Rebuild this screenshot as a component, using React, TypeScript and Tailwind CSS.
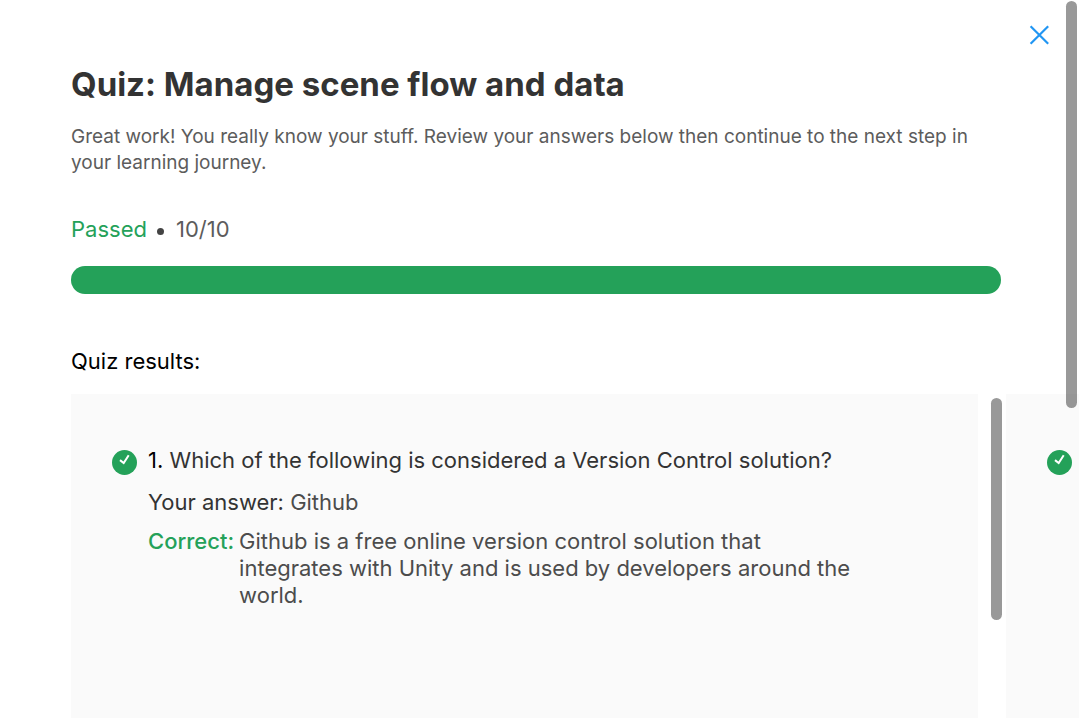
function CheckBadge() {
  return (
    <svg className="size-[25px] shrink-0" viewBox="0 0 25 25" fill="none" aria-hidden="true">
      <circle cx="12.5" cy="12.5" r="12.5" fill="#24A159" />
      <path d="M8 10.1 L11.7 13.1 L16.7 5.3" stroke="#fff" strokeWidth="2" />
    </svg>
  );
}

function ResultCard({ children }: { children?: React.ReactNode }) {
  return (
    <li className="flex w-full shrink-0">
      <article className="flex min-w-0 grow items-start gap-[11px] bg-[#fafafa] pt-14 pr-[120px] pl-[41px]">
        {children}
      </article>
      <div className="w-7 shrink-0 pt-1 pl-[13px]">
        <div className="h-[222px] w-[11px] rounded-full bg-[#999]" />
      </div>
    </li>
  );
}

export default function App() {
  return (
    <main
      className="relative flex h-screen flex-col overflow-hidden bg-white pt-5 pl-[71px] font-['Inter',sans-serif] text-[#333]"
      role="dialog"
      aria-labelledby="quiz-title"
    >
      <div className="flex shrink-0 justify-end pr-[25px]">
        <button type="button" aria-label="Close" className="flex size-[30px] items-center justify-center">
          <svg className="size-5" viewBox="0 0 20 20" fill="none" stroke="#2196F3" strokeWidth="2.2">
            <path d="M1.6 1.2 L19.2 18.8 M19.2 1.2 L1.6 18.8" />
          </svg>
        </button>
      </div>

      <header className="shrink-0 pt-3 pr-[78px]">
        <h1 id="quiz-title" className="text-[33px] leading-11 font-bold">
          Quiz: Manage scene flow and data
        </h1>
        <p className="mt-[18px] text-[19px] leading-[26px] font-normal text-[#5c5c5c]">
          Great work! You really know your stuff. Review your answers below then continue to the next step in your
          learning journey.
        </p>
        <p className="mt-[39px] flex items-center text-[22px] leading-7 font-normal text-[#5c5c5c]">
          <span className="text-[#24A159]">Passed</span>
          <span className="mt-1 mr-3 ml-[10px] size-[7px] rounded-full bg-[#444]" />
          <span>10/10</span>
        </p>
        <div
          className="mt-[23px] h-7 rounded-full bg-[#24A159]"
          role="progressbar"
          aria-label="Score"
          aria-valuenow={10}
          aria-valuemax={10}
        />
      </header>

      <section className="flex min-h-0 grow flex-col pt-[53px] pr-[73px]">
        <h2 className="text-[22px] leading-7 font-normal text-black">Quiz results:</h2>
        <ol className="mt-[19px] flex min-h-0 w-full grow">
          <ResultCard>
            <CheckBadge />
            <div className="-mt-[3px] min-w-0 grow text-[22px] leading-[27px] font-normal text-[#4c4c4c]">
              <h3 className="whitespace-nowrap text-[#333]">
                <span className="text-black">1.</span> Which of the following is considered a Version Control solution?
              </h3>
              <p className="mt-[15px]">
                <span className="text-[#333]">Your answer:</span> Github
              </p>
              <div className="mt-3 flex gap-[5px]">
                <span className="font-medium text-[#24A159]">Correct:</span>
                <p>
                  Github is a free online version control solution that integrates with Unity and is used by developers
                  around the world.
                </p>
              </div>
            </div>
          </ResultCard>
          <ResultCard>
            <CheckBadge />
          </ResultCard>
        </ol>
      </section>

      <div className="absolute top-px right-0.5 h-[407px] w-[11px] rounded-full bg-black/40" />
    </main>
  );
}
